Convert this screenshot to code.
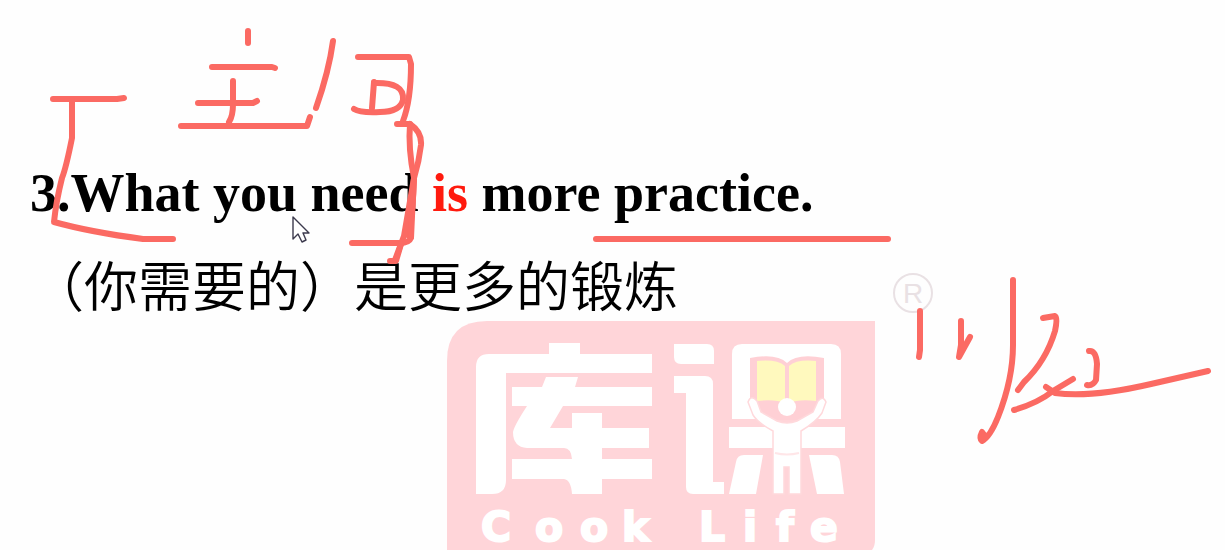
function BrandLogo() {
  return (
    <svg
      role="img"
      aria-label="Cook Life"
      viewBox="440 320 440 230"
      className="ml-[440px] block h-[230px] w-[440px] overflow-visible"
    >
      <path d="M447 550V361Q447 321 487 321H875V540Q875 546 872 550Z" fill="#ffd5d9" />

      {/* Left mark */}
      <g fill="#fff">
        <path d="M476 494V367Q476 354 489 354H549V343H580V354H652V373H506V480Q506 494 492 494Z" />
        <path d="M512 387H542L546 377H578L575 387H652V406H563L550 428H572V413H602V428H649V448H602V459H652V479H602V494H572Q571 480 564 479H512V459H572Q571 448 564 448H527Q513 447 513 432Q514 426 527 406H512Z" />
      </g>

      {/* Right mark */}
      <g fill="#fff">
        <path d="M674 344H707Q714 344 714 351V364H681Q674 364 674 357Z" />
        <path d="M674 376H705Q713 376 713 384V482H724V494H693Q686 494 686 487V393H674Z" />
        <path d="M732 419V354Q732 344 742 344H831Q841 344 841 354V419Z" />
        <path d="M729 427H845V448H729Z" />
        <path d="M736 462Q737 455 744 455H763L756 494H729Z" />
        <path d="M809 455H832Q839 455 840 462L844 494H817Z" />
      </g>

      {/* Open book and reader */}
      <path
        d="M750 358Q777 353 787 363Q797 353 824 358V402L807 420H767L750 402Z"
        fill="#ffd0d5"
      />
      <path d="M757 361Q777 359 785 366V403Q775 399 757 401Z" fill="#fff9be" />
      <path d="M816 361Q797 359 789 366V403Q799 399 816 401Z" fill="#fff9be" />
      <path
        d="M748 402Q751 394 757 401L761 412L777 421Q787 425 797 421L813 412L818 401Q823 395 826 402L822 413Q816 422 801 431V494H789V467H784V494H773V431Q758 423 753 415Z"
        fill="#fff"
        stroke="#ffd9dc"
        strokeWidth="1.5"
      />
      <path d="M775 453Q787 456 799 453" fill="none" stroke="#ffe6e8" strokeWidth="2" />
      <circle cx="787" cy="407" r="9" fill="#fff" />

      <text
        x="481 535 580 622 0 699 743 776 810"
        y="541"
        fill="#fff"
        stroke="#fff"
        strokeWidth="2"
        fontSize="41"
        fontWeight="700"
        fontFamily="'DejaVu Sans', sans-serif"
      >
        Cook Life
      </text>

      <circle cx="913" cy="293" r="19" fill="none" stroke="#e9e1e4" strokeWidth="2" />
      <text
        x="913"
        y="303"
        textAnchor="middle"
        fill="#e9e1e4"
        fontSize="28"
        fontFamily="'Liberation Sans', sans-serif"
      >
        R
      </text>
    </svg>
  );
}

const inkStrokes = [
  // Opening bracket
  "M53 99H117L124 98",
  "M72 100V138Q66 168 62 178Q56 202 54 222Q90 232 143 239H173",
  // First character
  "M248 31V43",
  "M212 67H272L275 68",
  "M198 103H253L257 101",
  "M233 81V104Q233 116 229 122",
  "M181 126H307L310 117",
  "M333 41Q329 71 316 108",
  // Second character
  "M358 57H409L411 64Q411 100 403 121",
  "M374 82L372 108",
  "M374 83Q405 82 403 100Q400 112 380 112Q360 113 354 109",
  // Closing bracket
  "M397 124H410Q408 148 414 178Q413 210 409 236",
  "M410 124Q422 132 421 145Q419 162 414 178L404 236L395 260",
  "M414 178L412 216L411 238Q409 243 400 243H352",
  "M390 261H396L401 244",
  // Underline
  "M596 239H888",
  // Notes beside the logo
  "M920 311V350L919 357",
  "M961 321V345L959 357L970 337",
  "M1013 280V345Q1013 379 998 417Q990 437 982 441Q979 438 982 432L985 436",
  "M1043 318L1055 316Q1058 317 1055 331Q1046 361 1024 382L1018 390",
  "M1014 410Q1038 403 1053 391L1073 379",
  "M1046 387L1055 393Q1091 398 1151 384L1208 371",
  "M1089 351Q1096 350 1097 364L1096 380Q1093 386 1087 385",
];

function InkAnnotations() {
  return (
    <svg
      aria-hidden="true"
      viewBox="0 0 1225 550"
      className="pointer-events-none absolute top-0 left-0 h-[550px] w-[1225px] max-w-none"
    >
      <g
        fill="none"
        stroke="#fb6a63"
        strokeWidth="6"
        strokeLinecap="round"
        strokeLinejoin="round"
      >
        {inkStrokes.map((d) => (
          <path key={d} d={d} />
        ))}
      </g>
      <path
        d="M293 217V239L298 234L302 242L306 240L303 233H309Z"
        fill="#fff"
        stroke="#3c3a4d"
        strokeWidth="1.4"
        strokeLinejoin="round"
      />
    </svg>
  );
}

export default function App() {
  return (
    <main className="relative min-h-screen overflow-hidden bg-[#fefefe] pt-[157px] text-black">
      <div className="px-[30px] text-[54px] leading-[72px] whitespace-nowrap">
        <h1 className="font-['Liberation_Serif',serif] font-bold">
          3.What you need <span className="text-[#ff1a0e]">is</span> more practice.
        </h1>
        <p
          lang="zh-CN"
          className="mt-[19px] font-['Noto_Sans_CJK_SC',sans-serif] font-[350]"
        >
          （你需要的）是更多的锻炼
        </p>
      </div>
      <BrandLogo />
      <InkAnnotations />
    </main>
  );
}
